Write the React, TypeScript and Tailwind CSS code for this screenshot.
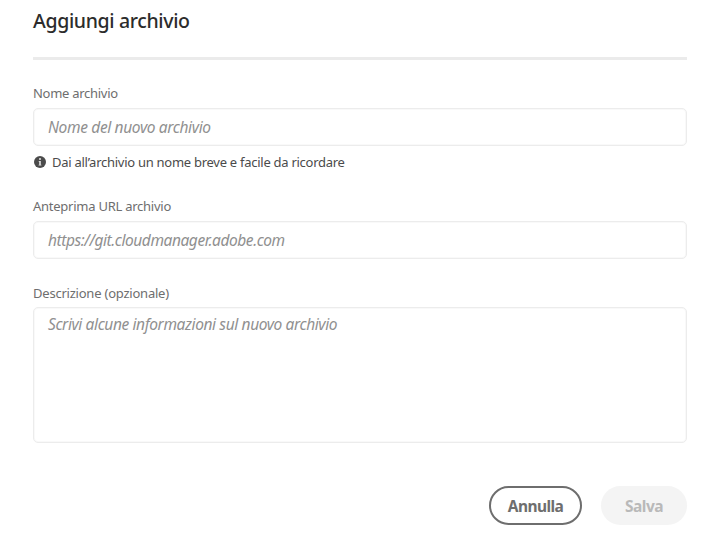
import type { ReactNode } from 'react';

function Label({ children, className }: { children: ReactNode; className: string }) {
  return (
    <div className={`h-5 text-[13px] leading-5 whitespace-nowrap text-[#6e6e6e] ${className}`}>
      <span>{children}</span>
    </div>
  );
}

function Field({ children, className }: { children: ReactNode; className: string }) {
  return (
    <div className={`rounded-[5px] border border-[#ececec] bg-white pl-3.5 text-[15.5px] leading-6 whitespace-nowrap text-[#909090] italic shadow-[inset_0_0_0_1px_#f9f9f9] ${className}`}>
      <span>{children}</span>
    </div>
  );
}

function InfoIcon() {
  return (
    <svg className="h-3 w-3 shrink-0" viewBox="0 0 12 12">
      <circle cx="6" cy="6" r="6" fill="#4b4b4b" />
      <circle cx="6" cy="3" r="1" fill="#e4e4e4" />
      <path d="M4.7 5h2.1v3.8h.6v.8H4.6v-.8h.6V5.8h-.5z" fill="#e4e4e4" />
    </svg>
  );
}

export default function App() {
  return (
    <main className="flex h-[536px] w-[720px] flex-col bg-white pr-[33px] pl-[33px] font-['Noto_Sans',sans-serif]">
      <h1 className="mt-[7px] h-7 text-[19.5px] leading-7 font-medium tracking-[-0.35px] whitespace-nowrap text-[#2c2c2c]">
        <span>Aggiungi archivio</span>
      </h1>
      <div className="mt-[22px] h-[3px] shrink-0 bg-[#ebebeb]" />

      <Label className="mt-[23px] tracking-[-0.28px]">Nome archivio</Label>
      <Field className="mt-[5px] h-[38px] pt-1.5 tracking-[-0.35px]">Nome del nuovo archivio</Field>
      <div className="mt-1.5 flex h-5 items-center gap-1.5 pl-px text-[13px] leading-5 whitespace-nowrap text-[#4b4b4b]">
        <InfoIcon />
        <span className="tracking-[-0.27px]">Dai all’archivio un nome breve e facile da ricordare</span>
      </div>

      <Label className="mt-6 tracking-[-0.25px]">Anteprima URL archivio</Label>
      <Field className="mt-[5px] h-[38px] pt-1.5 tracking-[-0.43px]">https://git.cloudmanager.adobe.com</Field>

      <Label className="mt-6 tracking-[-0.22px]">Descrizione (opzionale)</Label>
      <Field className="mt-1 h-[136px] pt-1 tracking-[-0.38px]">Scrivi alcune informazioni sul nuovo archivio</Field>

      <div className="mt-[43px] flex justify-end gap-[19px] text-[15.5px] font-bold">
        <button className="flex h-[39px] w-[93px] items-center justify-center rounded-full border-2 border-[#6e6e6e] pt-0.5 text-[#6e6e6e]">
          <span className="tracking-[-0.6px]">Annulla</span>
        </button>
        <button className="flex h-[39px] w-[86px] items-center justify-center rounded-full bg-[#f4f4f4] pt-0.5 text-[#b9b9b9]">
          <span className="tracking-[-0.5px]">Salva</span>
        </button>
      </div>
    </main>
  );
}
